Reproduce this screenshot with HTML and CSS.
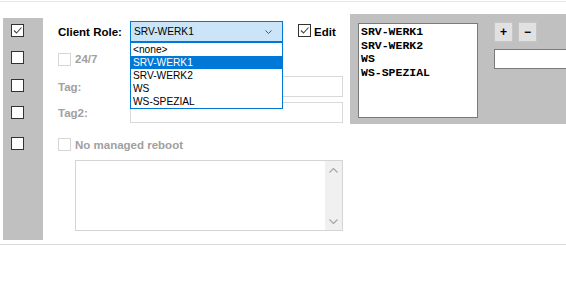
FILE: index.html
```html
<!DOCTYPE html>
<html>
<head>
    <meta charset="UTF-8" />
    <title>Client Role</title>
    <link rel="stylesheet" href="styles.css">
</head>
<body>
    <div class="page">
        <div class="row-select">
            <span class="box checked first"><svg viewBox="0 0 11 11" width="11" height="11"><path d="M2 5.5 L4.5 8 L9.5 2.5" fill="none" stroke="#444" stroke-width="1.1"/></svg></span>
            <span class="box b2"></span>
            <span class="box b3"></span>
            <span class="box b4"></span>
            <span class="box b5"></span>
        </div>

        <div class="form">
            <div class="row row-role">
                <label class="lbl">Client Role:</label>
                <div class="combo">
                    <div class="combo-field">
                        <span>SRV-WERK1</span>
                        <svg class="chev" viewBox="0 0 7 4" width="7" height="4"><path d="M0.5 0.5 L3.5 3.5 L6.5 0.5" fill="none" stroke="#555" stroke-width="1"/></svg>
                    </div>
                    <ul class="combo-list">
                        <li>&lt;none&gt;</li>
                        <li class="sel">SRV-WERK1</li>
                        <li>SRV-WERK2</li>
                        <li>WS</li>
                        <li>WS-SPEZIAL</li>
                    </ul>
                </div>
                <span class="box checked edit-box"><svg viewBox="0 0 11 11" width="11" height="11"><path d="M2 5.5 L4.5 8 L9.5 2.5" fill="none" stroke="#444" stroke-width="1.1"/></svg></span>
                <span class="lbl edit">Edit</span>
            </div>
            <div class="row row-247">
                <span class="dbox"></span>
                <span class="lbl off">24/7</span>
            </div>
            <div class="row row-tag">
                <label class="lbl off">Tag:</label>
                <div class="field"></div>
            </div>
            <div class="row row-tag2">
                <label class="lbl off">Tag2:</label>
                <div class="field"></div>
            </div>
            <div class="row row-reboot">
                <span class="dbox"></span>
                <span class="lbl off">No managed reboot</span>
            </div>
            <div class="memo">
                <div class="scroll">
                    <svg viewBox="0 0 9 5" width="9" height="5"><path d="M0.5 4.5 L4.5 0.5 L8.5 4.5" fill="none" stroke="#a6a6a6" stroke-width="1.2"/></svg>
                    <svg viewBox="0 0 9 5" width="9" height="5"><path d="M0.5 0.5 L4.5 4.5 L8.5 0.5" fill="none" stroke="#a6a6a6" stroke-width="1.2"/></svg>
                </div>
            </div>
        </div>

        <div class="side">
            <ul class="roles">
                <li>SRV-WERK1</li>
                <li>SRV-WERK2</li>
                <li>WS</li>
                <li>WS-SPEZIAL</li>
            </ul>
            <div class="tools">
                <div class="btns">
                    <button type="button">+</button>
                    <button type="button">&minus;</button>
                </div>
                <div class="new-role"></div>
            </div>
        </div>
    </div>
</body>
</html>
```

FILE: styles.css
```css
body {
    margin: 0;
    padding: 0;
    background: #fff;
    font-family: "Liberation Sans", Arial, sans-serif;
    overflow: hidden;
}
.page {
    margin-top: 1px;
    height: 242px;
    border-top: 1px solid #e8e8e8;
    border-bottom: 1px solid #dadada;
    display: flex;
    align-items: flex-start;
}
.row-select {
    margin: 16px 0 0 3px;
    width: 40px;
    height: 222px;
    flex: none;
    background: #c0c0c0;
    padding: 6px 0 0 8px;
    box-sizing: border-box;
    display: flex;
    flex-direction: column;
}
.box {
    display: block;
    width: 13px;
    height: 13px;
    box-sizing: border-box;
    border: 1px solid #333;
    background: #fff;
    flex: none;
}
.box svg {
    display: block;
}
.b2 { margin-top: 14px; }
.b3 { margin-top: 15px; }
.b4 { margin-top: 14px; }
.b5 { margin-top: 18px; }

.form {
    margin: 19px 0 0 15px;
    width: 285px;
    flex: none;
}
.row {
    display: flex;
    align-items: center;
}
.lbl {
    font-weight: bold;
    font-size: 11.5px;
    color: #000;
}
.lbl.off {
    color: #a0a0a0;
}
.row-role {
    height: 21px;
}
.row-role .lbl:first-child,
.row-tag .lbl,
.row-tag2 .lbl {
    width: 72px;
    flex: none;
}
.combo {
    position: relative;
    width: 153px;
    height: 21px;
    flex: none;
}
.combo-field {
    height: 21px;
    box-sizing: border-box;
    border: 1px solid #0078d7;
    background: #cce4f7;
    display: flex;
    align-items: center;
    justify-content: space-between;
    padding: 0 10px 0 3px;
    font-size: 10.2px;
    color: #000;
}
.chev {
    display: block;
}
.combo-list {
    position: absolute;
    left: 0;
    top: 21px;
    width: 153px;
    box-sizing: border-box;
    margin: 0;
    padding: 0;
    list-style: none;
    border: 1px solid #0078d7;
    background: #fff;
    z-index: 2;
    font-size: 10.2px;
}
.combo-list li {
    height: 13px;
    line-height: 13px;
    padding-left: 2px;
}
.combo-list li.sel {
    background: #0078d7;
    color: #fff;
}
.edit-box {
    margin-left: 15px;
    margin-top: -2px;
}
.edit {
    margin-left: 3px;
}
.row-247 {
    height: 34px;
}
.dbox {
    display: block;
    width: 13px;
    height: 13px;
    box-sizing: border-box;
    border: 1px solid #d6d6d6;
    background: #fff;
    flex: none;
    margin-right: 4px;
}
.field {
    width: 213px;
    height: 21px;
    box-sizing: border-box;
    border: 1px solid #d9d9d9;
    background: #fff;
}
.row-tag2 {
    margin-top: 5px;
}
.row-reboot {
    margin-top: 15px;
    height: 13px;
}
.memo {
    margin: 9px 0 0 17px;
    width: 268px;
    height: 71px;
    box-sizing: border-box;
    border: 1px solid #d4d4d4;
    display: flex;
    justify-content: flex-end;
}
.scroll {
    width: 17px;
    background: #f0f0f0;
    display: flex;
    flex-direction: column;
    align-items: center;
    justify-content: space-between;
    padding: 7px 0 6px;
}
.scroll svg {
    display: block;
}

.side {
    margin: 12px 0 0 7px;
    height: 110px;
    flex: 1;
    min-width: 0;
    overflow: hidden;
    background: #c0c0c0;
    box-sizing: border-box;
    padding: 8px 0 0 8px;
    display: flex;
    align-items: flex-start;
}
.roles {
    margin: 1px 0 0 0;
    padding: 1px 2px;
    list-style: none;
    width: 120px;
    height: 95px;
    flex: none;
    box-sizing: border-box;
    border: 1px solid #7a7a7a;
    background: #fff;
    font-family: "Liberation Mono", "Courier New", monospace;
    font-weight: bold;
    font-size: 11.5px;
    line-height: 13.7px;
    color: #000;
}
.tools {
    margin-left: 16px;
    flex: none;
}
.btns {
    display: flex;
    gap: 5px;
}
.btns button {
    width: 19px;
    height: 20px;
    padding: 0;
    box-sizing: border-box;
    border: 1px solid #c6c6c6;
    background: #e1e1e1;
    font-family: "Liberation Sans", Arial, sans-serif;
    font-size: 12px;
    font-weight: bold;
    color: #000;
    line-height: 16px;
}
.new-role {
    margin-top: 7px;
    width: 100px;
    height: 20px;
    box-sizing: border-box;
    border: 1px solid #7a7a7a;
    background: #fff;
}
```
